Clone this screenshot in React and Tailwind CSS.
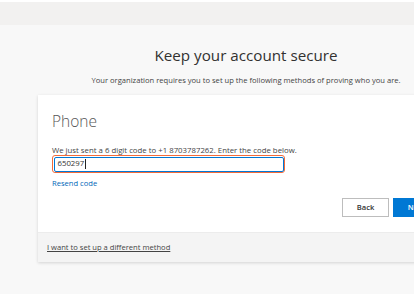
export default function App() {
  return (
    <div className="h-[294px] w-[414px] overflow-hidden bg-[#f8f8f8] font-['Open_Sans',sans-serif]">
      <div className="h-[2px] bg-white" />
      <div className="h-[23px] bg-[#f2f1f0]" />
      <div className="ml-[38px] w-[416px]">
        <h1 className="mt-[19px] text-center text-[15.2px] leading-[22px] text-[#323130]">Keep your account secure</h1>
        <p className="mt-[8px] text-center text-[7.6px] leading-[12px] text-[#444]">
          Your organization requires you to set up the following methods of proving who you are.
        </p>
        <div className="mt-[9px] bg-white shadow-[0_1px_3px_rgba(0,0,0,0.15)]">
          <div className="px-[14px] pt-[16px] pb-[15px]">
            <h2 className="text-[15.5px] font-light leading-[20px] text-[#555]">Phone</h2>
            <p className="mt-[14px] text-[7.8px] leading-[10px] text-[#444]">
              We just sent a 6 digit code to +1 8703787262. Enter the code below.
            </p>
            <div className="w-[233px] rounded-[3px] border-[1.5px] border-[#f26b3a] p-[0.5px]">
              <div className="flex h-[15px] items-center rounded-[2px] border border-[#0078d4] px-[3px] text-[7.8px] text-[#333]">
                650297<span className="ml-px inline-block h-[10px] w-px bg-[#222]" />
              </div>
            </div>
            <a className="mt-[4px] block text-[7.6px] leading-[12px] text-[#0067b8]">Resend code</a>
            <div className="mt-[9px] flex justify-end gap-[4px]">
              <button className="h-[19px] w-[47px] border border-[#bdbdbd] bg-white text-[7.6px] font-semibold text-[#333]">Back</button>
              <button className="h-[19px] w-[47px] bg-[#0078d4] text-[7.6px] font-semibold text-white">Next</button>
            </div>
          </div>
          <div className="border-t border-[#ececec] bg-[#f4f4f4] px-[9px] pt-[8px] pb-[8px]">
            <a className="block text-[7.6px] leading-[13px] text-[#444] underline">I want to set up a different method</a>
          </div>
        </div>
      </div>
    </div>
  )
}
